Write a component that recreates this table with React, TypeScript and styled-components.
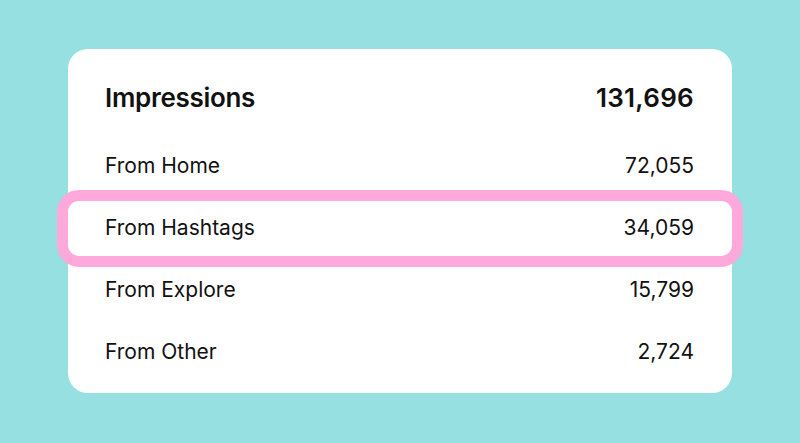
import React from "react";
import styled, { createGlobalStyle } from "styled-components";

const Global = createGlobalStyle`
  html, body { margin: 0; padding: 0; }
  body {
    background: #96e0e2;
    font-family: Inter, "Noto Sans", "Liberation Sans", sans-serif;
    -webkit-font-smoothing: antialiased;
  }
`;

const Page = styled.div`
  width: 800px;
  height: 443px;
  box-sizing: border-box;
  padding: 49px 68px 50px 68px;
  background: #96e0e2;
`;

const Card = styled.div`
  background: #ffffff;
  border-radius: 20px;
  padding: 10px 38px 12px 37px;
  display: flex;
  flex-direction: column;
`;

const Row = styled.div<{ $header?: boolean }>`
  position: relative;
  display: flex;
  align-items: center;
  justify-content: space-between;
  height: ${(p) => (p.$header ? "74px" : "62px")};
  color: #111111;
  font-size: ${(p) => (p.$header ? "26px" : "21px")};
  font-weight: ${(p) => (p.$header ? 600 : 400)};
`;

const Label = styled.span<{ $header?: boolean }>`
  letter-spacing: ${(p) => (p.$header ? "-0.3px" : "0")};
  padding-top: 2px;
`;

const Value = styled.span<{ $header?: boolean }>`
  letter-spacing: ${(p) => (p.$header ? "0.3px" : "0")};
  padding-top: 2px;
`;

const Highlight = styled.div`
  position: absolute;
  top: -5px;
  bottom: -10px;
  left: -48px;
  right: -49px;
  border: 11px solid #ffa8db;
  border-radius: 22px;
  pointer-events: none;
`;

const rows = [
  { label: "From Home", value: "72,055" },
  { label: "From Hashtags", value: "34,059", highlight: true },
  { label: "From Explore", value: "15,799" },
  { label: "From Other", value: "2,724" },
];

export default function App() {
  return (
    <>
      <Global />
      <Page>
        <Card>
          <Row $header>
            <Label $header>Impressions</Label>
            <Value $header>131,696</Value>
          </Row>
          {rows.map((r) => (
            <Row key={r.label}>
              <Label>{r.label}</Label>
              <Value>{r.value}</Value>
              {r.highlight && <Highlight />}
            </Row>
          ))}
        </Card>
      </Page>
    </>
  );
}
